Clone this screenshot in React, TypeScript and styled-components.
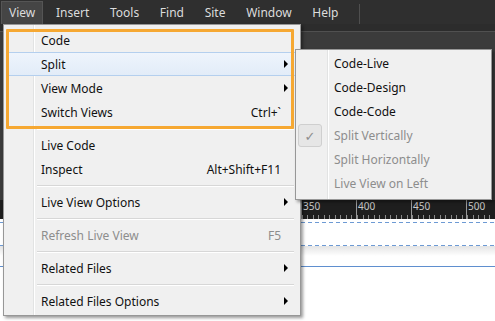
import React from "react";
import styled, { createGlobalStyle } from "styled-components";

const GlobalStyle = createGlobalStyle`
  html, body {
    margin: 0;
    padding: 0;
    background: #3a3a3a;
  }
  body {
    font-family: "Noto Sans", "Open Sans", "DejaVu Sans", sans-serif;
  }
`;

interface MenuEntry {
  label?: string;
  shortcut?: string;
  submenu?: boolean;
  disabled?: boolean;
  active?: boolean;
  checked?: boolean;
  separator?: boolean;
}

const barItems = ["View", "Insert", "Tools", "Find", "Site", "Window", "Help"];

const viewMenu: MenuEntry[] = [
  { label: "Code" },
  { label: "Split", submenu: true, active: true },
  { label: "View Mode", submenu: true },
  { label: "Switch Views", shortcut: "Ctrl+`" },
  { separator: true },
  { label: "Live Code" },
  { label: "Inspect", shortcut: "Alt+Shift+F11" },
  { separator: true },
  { label: "Live View Options", submenu: true },
  { separator: true },
  { label: "Refresh Live View", shortcut: "F5", disabled: true },
  { separator: true },
  { label: "Related Files", submenu: true },
  { separator: true },
  { label: "Related Files Options", submenu: true },
];

const splitMenu: MenuEntry[] = [
  { label: "Code-Live" },
  { label: "Code-Design" },
  { label: "Code-Code" },
  { label: "Split Vertically", disabled: true, checked: true },
  { label: "Split Horizontally", disabled: true },
  { label: "Live View on Left", disabled: true },
];

const rulerMarks = [350, 400, 450, 500];

const Page = styled.div`
  position: relative;
  width: 495px;
  height: 321px;
  overflow: hidden;
  display: flex;
  flex-direction: column;
  background: #3a3a3a;
`;

const MenuBar = styled.div`
  height: 24px;
  flex: none;
  display: flex;
  align-items: center;
  gap: 4.7px;
  padding-left: 1px;
  background: #2f2f2f;
`;

const BarItem = styled.div<{ $open?: boolean }>`
  height: 23px;
  padding: 0 7px;
  display: flex;
  align-items: center;
  box-sizing: border-box;
  font-size: 12px;
  color: #dcdcdc;
  background: ${(p) => (p.$open ? "#454545" : "transparent")};
  border: 1px solid ${(p) => (p.$open ? "#555" : "transparent")};
  border-bottom: none;
`;

const BarDivider = styled.div`
  width: 1px;
  height: 20px;
  margin-left: 8px;
  align-self: flex-end;
  background: #4f4f4f;
`;

const DocStrip = styled.div`
  height: 7px;
  flex: none;
  background: #2c2c2c;
  border-bottom: 1px solid #505050;
`;

const Toolbar = styled.div`
  height: 168px;
  flex: none;
  background: #3b3b3b;
`;

const Ruler = styled.div`
  height: 19px;
  flex: none;
  display: flex;
  padding-left: 301px;
  background: #1e1e1e;
`;

const RulerSegment = styled.div`
  width: 55px;
  flex: none;
  box-sizing: border-box;
  border-left: 1px solid #9a9a9a;
  font-size: 10px;
  line-height: 12px;
  color: #c9c9c9;
  padding-left: 1px;
  background: repeating-linear-gradient(
      to right,
      #8a8a8a 0 1px,
      transparent 1px 5.5px
    )
    bottom / 100% 4px no-repeat;
`;

const Canvas = styled.div`
  flex: 1;
  background: #fff;
  display: flex;
  flex-direction: column;
`;

const DashedGuide = styled.div<{ $top: number }>`
  height: 1px;
  margin-top: ${(p) => p.$top}px;
  background: repeating-linear-gradient(to right, #6d9ad4 0 4px, transparent 4px 7px);
`;

const GuideShade = styled.div`
  height: 10px;
  background: linear-gradient(#e4e4e4, #fff);
`;

const SolidGuide = styled.div`
  height: 1px;
  margin-top: 10px;
  background: #5f8fcf;
`;

const Menu = styled.div<{ $left: number; $top: number; $width: number; $gutter: number; $indent: number }>`
  --indent: ${(p) => p.$indent}px;
  position: absolute;
  left: ${(p) => p.$left}px;
  top: ${(p) => p.$top}px;
  width: ${(p) => p.$width}px;
  box-sizing: border-box;
  padding: 3px 0 2px;
  border: 1px solid #979797;
  box-shadow: 2px 2px 3px rgba(0, 0, 0, 0.4);
  background:
    linear-gradient(
      to right,
      transparent ${(p) => p.$gutter}px,
      #e2e3e3 ${(p) => p.$gutter}px ${(p) => p.$gutter + 1}px,
      #ffffff ${(p) => p.$gutter + 1}px ${(p) => p.$gutter + 2}px,
      transparent ${(p) => p.$gutter + 2}px
    ),
    #f0f0f0;
`;

const SubMenu = styled(Menu)`
  padding: 1px 0 4px;
  z-index: 2;
`;

const Item = styled.div<{ $disabled?: boolean; $active?: boolean }>`
  height: 24px;
  margin: 0 2px;
  box-sizing: border-box;
  display: grid;
  grid-template-columns: var(--indent) 1fr auto 15px;
  align-items: center;
  padding-right: 1px;
  font-size: 12px;
  color: ${(p) => (p.$disabled ? "#8d8d8d" : "#111")};
  border: 1px solid ${(p) => (p.$active ? "#b4cfee" : "transparent")};
  border-radius: 2px;
  background: ${(p) =>
    p.$active ? "linear-gradient(#eef4fc, #e2ecf8)" : "transparent"};
`;

const Label = styled.span`
  white-space: nowrap;
`;

const Shortcut = styled.span`
  white-space: nowrap;
  text-align: right;
`;

const ArrowCell = styled.span`
  display: flex;
  align-items: center;
`;

const Arrow = styled.span`
  display: block;
  width: 0;
  height: 0;
  margin-left: 3px;
  border-top: 4px solid transparent;
  border-bottom: 4px solid transparent;
  border-left: 4px solid #000;
`;

const CheckBox = styled.span`
  width: 24px;
  height: 23px;
  margin-left: -1px;
  box-sizing: border-box;
  display: flex;
  align-items: center;
  justify-content: center;
  border: 1px solid #cfcfcf;
  border-radius: 3px;
  background: #e6e6e6;
  color: #8d8d8d;
  font-size: 13px;
`;

const Separator = styled.div`
  height: 9px;
  margin-left: 33px;
  margin-right: 6px;
  display: flex;
  align-items: center;
  &::after {
    content: "";
    flex: 1;
    height: 1px;
    background: #d7d7d7;
    border-bottom: 1px solid #fff;
  }
`;

const Highlight = styled.div`
  position: absolute;
  left: 6px;
  top: 29px;
  width: 288px;
  height: 100px;
  box-sizing: border-box;
  border: 3px solid #f6a832;
  border-radius: 1px;
  pointer-events: none;
  z-index: 3;
`;

const MenuRows = ({ entries }: { entries: MenuEntry[] }) => (
  <>
    {entries.map((entry, index) =>
      entry.separator ? (
        <Separator key={index} />
      ) : (
        <Item key={index} $disabled={entry.disabled} $active={entry.active}>
          <span>{entry.checked && <CheckBox>✓</CheckBox>}</span>
          <Label>{entry.label}</Label>
          <Shortcut>{entry.shortcut}</Shortcut>
          <ArrowCell>{entry.submenu && <Arrow />}</ArrowCell>
        </Item>
      )
    )}
  </>
);

export default function App() {
  return (
    <Page>
      <GlobalStyle />
      <MenuBar>
        {barItems.map((name, index) => (
          <BarItem key={name} $open={index === 0}>
            {name}
          </BarItem>
        ))}
        <BarDivider />
      </MenuBar>
      <DocStrip />
      <Toolbar />
      <Ruler>
        {rulerMarks.map((mark) => (
          <RulerSegment key={mark}>{mark}</RulerSegment>
        ))}
      </Ruler>
      <Canvas>
        <DashedGuide $top={3} />
        <DashedGuide $top={22} />
        <GuideShade />
        <SolidGuide />
      </Canvas>

      <Menu $left={3} $top={24} $width={298} $gutter={29} $indent={34}>
        <MenuRows entries={viewMenu} />
      </Menu>
      <SubMenu $left={295} $top={49} $width={197} $gutter={31} $indent={35}>
        <MenuRows entries={splitMenu} />
      </SubMenu>
      <Highlight />
    </Page>
  );
}
